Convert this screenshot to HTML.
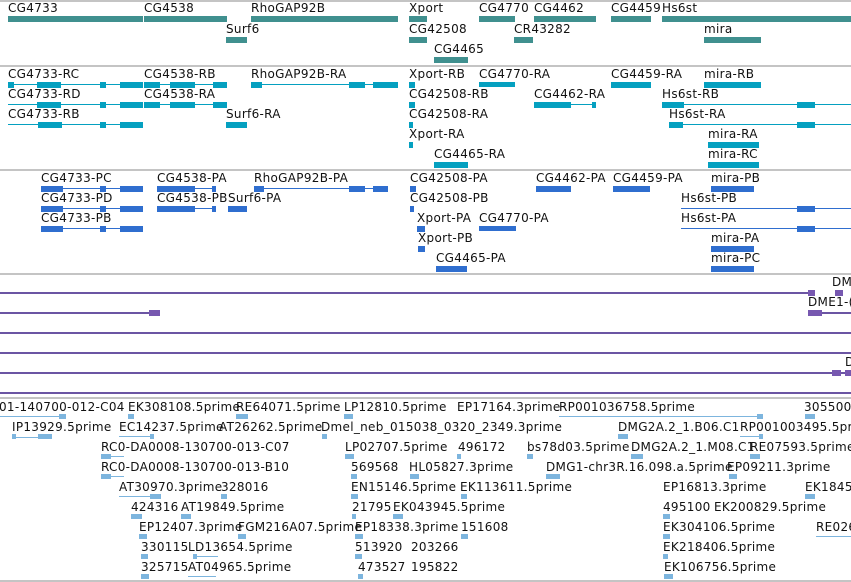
<!DOCTYPE html>
<html><head><meta charset="utf-8"><style>
html,body{margin:0;padding:0;background:#fff;width:851px;height:582px;overflow:hidden;position:relative}
.t{position:absolute;font-family:"DejaVu Sans","Liberation Sans",sans-serif;font-size:12px;line-height:14px;color:#111;white-space:nowrap;letter-spacing:0.3px}
.g{position:absolute;left:0;width:851px;height:2px;background:#c4c4c4}
.a{position:absolute;height:6px;background:#40908f}
.b{position:absolute;height:6px;background:#05a0c0}
.bl{position:absolute;height:1px;background:#05a0c0}
.c{position:absolute;height:6px;background:#2f6ecf}
.cl{position:absolute;height:1px;background:#2f6ecf}
.p{position:absolute;height:2px;background:#6b55a3}
.pb{position:absolute;height:6px;background:#7758b0}
.e{position:absolute;height:5px;background:#7db5de}
.el{position:absolute;height:1px;background:#7db5de}
</style></head><body>
<div class="g" style="top:0"></div>
<div class="t" style="left:8px;top:1px">CG4733</div><div class="a" style="left:8px;top:16px;width:135px"></div>
<div class="t" style="left:144px;top:1px">CG4538</div><div class="a" style="left:144px;top:16px;width:83px"></div>
<div class="t" style="left:251px;top:1px">RhoGAP92B</div><div class="a" style="left:251px;top:16px;width:147px"></div>
<div class="t" style="left:409px;top:1px">Xport</div><div class="a" style="left:409px;top:16px;width:18px"></div>
<div class="t" style="left:479px;top:1px">CG4770</div><div class="a" style="left:479px;top:16px;width:36px"></div>
<div class="t" style="left:534px;top:1px">CG4462</div><div class="a" style="left:534px;top:16px;width:62px"></div>
<div class="t" style="left:611px;top:1px">CG4459</div><div class="a" style="left:611px;top:16px;width:40px"></div>
<div class="t" style="left:662px;top:1px">Hs6st</div><div class="a" style="left:662px;top:16px;width:189px"></div>
<div class="t" style="left:226px;top:22px">Surf6</div><div class="a" style="left:226px;top:37px;width:21px"></div>
<div class="t" style="left:409px;top:22px">CG42508</div><div class="a" style="left:409px;top:37px;width:18px"></div>
<div class="t" style="left:514px;top:22px">CR43282</div><div class="a" style="left:514px;top:37px;width:19px"></div>
<div class="t" style="left:704px;top:22px">mira</div><div class="a" style="left:704px;top:37px;width:57px"></div>
<div class="t" style="left:434px;top:42px">CG4465</div><div class="a" style="left:434px;top:57px;width:34px"></div>
<div class="g" style="top:65px"></div>
<div class="t" style="left:8px;top:67px">CG4733-RC</div><div class="bl" style="left:8px;top:84px;width:135px"></div><div class="b" style="left:37px;top:82px;width:24px"></div><div class="b" style="left:8px;top:82px;width:6px"></div><div class="b" style="left:100px;top:82px;width:6px"></div><div class="b" style="left:120px;top:82px;width:23px"></div>
<div class="t" style="left:144px;top:67px">CG4538-RB</div><div class="b" style="left:144px;top:82px;width:16px"></div><div class="b" style="left:170px;top:82px;width:25px"></div><div class="bl" style="left:144px;top:84px;width:83px"></div><div class="b" style="left:213px;top:82px;width:14px"></div>
<div class="t" style="left:251px;top:67px">RhoGAP92B-RA</div><div class="bl" style="left:251px;top:84px;width:147px"></div><div class="b" style="left:349px;top:82px;width:16px"></div><div class="b" style="left:373px;top:82px;width:25px"></div><div class="b" style="left:251px;top:82px;width:11px"></div>
<div class="t" style="left:409px;top:67px">Xport-RB</div><div class="b" style="left:409px;top:82px;width:6px"></div>
<div class="t" style="left:479px;top:67px">CG4770-RA</div><div class="b" style="left:479px;top:82px;width:36px;height:5px"></div>
<div class="t" style="left:611px;top:67px">CG4459-RA</div><div class="b" style="left:611px;top:82px;width:40px"></div>
<div class="t" style="left:704px;top:67px">mira-RB</div><div class="b" style="left:704px;top:82px;width:57px"></div>
<div class="t" style="left:8px;top:87px">CG4733-RD</div><div class="bl" style="left:8px;top:104px;width:135px"></div><div class="b" style="left:37px;top:102px;width:24px"></div><div class="b" style="left:120px;top:102px;width:23px"></div><div class="b" style="left:100px;top:102px;width:6px"></div>
<div class="t" style="left:144px;top:87px">CG4538-RA</div><div class="b" style="left:144px;top:102px;width:16px"></div><div class="b" style="left:170px;top:102px;width:25px"></div><div class="bl" style="left:144px;top:104px;width:83px"></div><div class="b" style="left:213px;top:102px;width:14px"></div>
<div class="t" style="left:409px;top:87px">CG42508-RB</div><div class="b" style="left:409px;top:102px;width:6px"></div>
<div class="t" style="left:534px;top:87px">CG4462-RA</div><div class="b" style="left:534px;top:102px;width:37px"></div><div class="bl" style="left:534px;top:104px;width:62px"></div><div class="b" style="left:592px;top:102px;width:4px"></div>
<div class="t" style="left:662px;top:87px">Hs6st-RB</div><div class="bl" style="left:662px;top:104px;width:189px"></div><div class="b" style="left:662px;top:102px;width:22px"></div><div class="b" style="left:797px;top:102px;width:18px"></div>
<div class="t" style="left:8px;top:107px">CG4733-RB</div><div class="bl" style="left:8px;top:124px;width:135px"></div><div class="b" style="left:38px;top:122px;width:24px"></div><div class="b" style="left:120px;top:122px;width:23px"></div><div class="b" style="left:100px;top:122px;width:6px"></div>
<div class="t" style="left:226px;top:107px">Surf6-RA</div><div class="b" style="left:226px;top:122px;width:21px"></div>
<div class="t" style="left:409px;top:107px">CG42508-RA</div><div class="b" style="left:409px;top:122px;width:4px"></div>
<div class="t" style="left:669px;top:107px">Hs6st-RA</div><div class="bl" style="left:669px;top:124px;width:182px"></div><div class="b" style="left:669px;top:122px;width:14px"></div><div class="b" style="left:797px;top:122px;width:18px"></div>
<div class="t" style="left:409px;top:127px">Xport-RA</div><div class="b" style="left:409px;top:142px;width:4px"></div>
<div class="t" style="left:708px;top:127px">mira-RA</div><div class="b" style="left:708px;top:142px;width:51px"></div>
<div class="t" style="left:434px;top:147px">CG4465-RA</div><div class="b" style="left:434px;top:162px;width:34px"></div>
<div class="t" style="left:708px;top:147px">mira-RC</div><div class="b" style="left:708px;top:162px;width:51px"></div>
<div class="g" style="top:169px"></div>
<div class="t" style="left:41px;top:171px">CG4733-PC</div><div class="cl" style="left:41px;top:188px;width:102px"></div><div class="c" style="left:41px;top:186px;width:22px"></div><div class="c" style="left:120px;top:186px;width:23px"></div><div class="c" style="left:100px;top:186px;width:6px"></div>
<div class="t" style="left:157px;top:171px">CG4538-PA</div><div class="c" style="left:157px;top:186px;width:38px"></div><div class="cl" style="left:157px;top:188px;width:59px"></div><div class="c" style="left:212px;top:186px;width:4px"></div>
<div class="t" style="left:254px;top:171px">RhoGAP92B-PA</div><div class="cl" style="left:254px;top:188px;width:134px"></div><div class="c" style="left:349px;top:186px;width:16px"></div><div class="c" style="left:373px;top:186px;width:15px"></div><div class="c" style="left:254px;top:186px;width:10px"></div>
<div class="t" style="left:410px;top:171px">CG42508-PA</div><div class="c" style="left:410px;top:186px;width:6px"></div>
<div class="t" style="left:536px;top:171px">CG4462-PA</div><div class="c" style="left:536px;top:186px;width:35px"></div>
<div class="t" style="left:613px;top:171px">CG4459-PA</div><div class="c" style="left:613px;top:186px;width:37px"></div>
<div class="t" style="left:711px;top:171px">mira-PB</div><div class="c" style="left:711px;top:186px;width:43px"></div>
<div class="t" style="left:41px;top:191px">CG4733-PD</div><div class="cl" style="left:41px;top:208px;width:102px"></div><div class="c" style="left:41px;top:206px;width:22px"></div><div class="c" style="left:120px;top:206px;width:23px"></div><div class="c" style="left:100px;top:206px;width:6px"></div>
<div class="t" style="left:157px;top:191px">CG4538-PB</div><div class="c" style="left:157px;top:206px;width:38px"></div><div class="cl" style="left:157px;top:208px;width:59px"></div><div class="c" style="left:212px;top:206px;width:4px"></div>
<div class="t" style="left:228px;top:191px">Surf6-PA</div><div class="c" style="left:228px;top:206px;width:19px"></div>
<div class="t" style="left:410px;top:191px">CG42508-PB</div><div class="c" style="left:410px;top:206px;width:4px"></div>
<div class="t" style="left:681px;top:191px">Hs6st-PB</div><div class="cl" style="left:681px;top:208px;width:170px"></div><div class="c" style="left:797px;top:206px;width:18px"></div>
<div class="t" style="left:41px;top:211px">CG4733-PB</div><div class="cl" style="left:41px;top:228px;width:102px"></div><div class="c" style="left:41px;top:226px;width:22px"></div><div class="c" style="left:120px;top:226px;width:23px"></div><div class="c" style="left:100px;top:226px;width:6px"></div>
<div class="t" style="left:417px;top:211px">Xport-PA</div><div class="c" style="left:417px;top:226px;width:8px"></div>
<div class="t" style="left:479px;top:211px">CG4770-PA</div><div class="c" style="left:479px;top:226px;width:37px;height:5px"></div>
<div class="t" style="left:681px;top:211px">Hs6st-PA</div><div class="cl" style="left:681px;top:228px;width:170px"></div><div class="c" style="left:797px;top:226px;width:18px"></div>
<div class="t" style="left:418px;top:231px">Xport-PB</div><div class="c" style="left:418px;top:246px;width:7px"></div>
<div class="t" style="left:711px;top:231px">mira-PA</div><div class="c" style="left:711px;top:246px;width:43px"></div>
<div class="t" style="left:436px;top:251px">CG4465-PA</div><div class="c" style="left:436px;top:266px;width:31px"></div>
<div class="t" style="left:711px;top:251px">mira-PC</div><div class="c" style="left:711px;top:266px;width:43px"></div>
<div class="g" style="top:273px"></div>
<div class="p" style="left:0;top:292px;width:815px"></div><div class="pb" style="left:808px;top:290px;width:7px"></div>
<div class="t" style="left:832px;top:275px">DM</div><div class="pb" style="left:835px;top:290px;width:8px"></div>
<div class="t" style="left:808px;top:295px">DME1-(</div>
<div class="p" style="left:0;top:312px;width:160px"></div><div class="pb" style="left:149px;top:310px;width:11px"></div>
<div class="p" style="left:808px;top:312px;width:43px"></div><div class="pb" style="left:808px;top:310px;width:14px"></div>
<div class="p" style="left:0;top:332px;width:851px"></div>
<div class="p" style="left:0;top:352px;width:851px"></div>
<div class="t" style="left:845px;top:355px">D</div>
<div class="p" style="left:0;top:372px;width:851px"></div><div class="pb" style="left:832px;top:370px;width:9px"></div><div class="pb" style="left:845px;top:370px;width:6px"></div>
<div class="p" style="left:0;top:392px;width:851px"></div>
<div class="g" style="top:397px"></div>
<div class="t" style="left:-1px;top:400px">01-140700-012-C04</div><div class="el" style="left:0;top:416px;width:66px"></div><div class="e" style="left:59px;top:414px;width:7px"></div>
<div class="t" style="left:128px;top:400px">EK308108.5prime</div><div class="e" style="left:128px;top:414px;width:6px"></div>
<div class="t" style="left:236px;top:400px">RE64071.5prime</div><div class="e" style="left:236px;top:414px;width:12px"></div>
<div class="t" style="left:344px;top:400px">LP12810.5prime</div><div class="e" style="left:344px;top:414px;width:9px"></div>
<div class="t" style="left:457px;top:400px">EP17164.3prime</div>
<div class="t" style="left:559px;top:400px">RP001036758.5prime</div><div class="el" style="left:559px;top:416px;width:204px"></div><div class="e" style="left:757px;top:414px;width:6px"></div>
<div class="t" style="left:804px;top:400px">305500</div><div class="e" style="left:805px;top:414px;width:10px"></div>
<div class="t" style="left:12px;top:420px">IP13929.5prime</div><div class="el" style="left:12px;top:437px;width:40px"></div><div class="e" style="left:38px;top:434px;width:14px"></div><div class="e" style="left:12px;top:434px;width:4px"></div>
<div class="t" style="left:119px;top:420px">EC14237.5prime</div><div class="el" style="left:119px;top:436px;width:35px"></div><div class="e" style="left:150px;top:434px;width:4px"></div>
<div class="t" style="left:219px;top:420px">AT26262.5prime</div>
<div class="t" style="left:321px;top:420px">Dmel_neb_015038_0320_2349.3prime</div><div class="e" style="left:322px;top:434px;width:5px"></div>
<div class="t" style="left:618px;top:420px">DMG2A.2_1.B06.C1</div><div class="e" style="left:618px;top:434px;width:10px"></div>
<div class="t" style="left:740px;top:420px">RP001003495.5prime</div><div class="el" style="left:740px;top:436px;width:23px"></div><div class="e" style="left:759px;top:434px;width:4px"></div>
<div class="t" style="left:101px;top:440px">RC0-DA0008-130700-013-C07</div><div class="el" style="left:101px;top:456px;width:23px"></div><div class="e" style="left:101px;top:454px;width:10px"></div>
<div class="t" style="left:345px;top:440px">LP02707.5prime</div><div class="e" style="left:345px;top:454px;width:9px"></div>
<div class="t" style="left:458px;top:440px">496172</div><div class="e" style="left:457px;top:454px;width:4px"></div>
<div class="t" style="left:527px;top:440px">bs78d03.5prime</div><div class="e" style="left:527px;top:454px;width:6px"></div>
<div class="t" style="left:631px;top:440px">DMG2A.2_1.M08.C1</div><div class="e" style="left:631px;top:454px;width:12px"></div>
<div class="t" style="left:750px;top:440px">RE07593.5prime</div><div class="e" style="left:750px;top:454px;width:10px"></div>
<div class="t" style="left:101px;top:460px">RC0-DA0008-130700-013-B10</div><div class="el" style="left:101px;top:476px;width:23px"></div><div class="e" style="left:101px;top:474px;width:10px"></div>
<div class="t" style="left:351px;top:460px">569568</div><div class="e" style="left:351px;top:474px;width:6px"></div>
<div class="t" style="left:409px;top:460px">HL05827.3prime</div><div class="e" style="left:410px;top:474px;width:9px"></div>
<div class="t" style="left:546px;top:460px">DMG1-chr3R.16.098.a.5prime</div><div class="e" style="left:546px;top:474px;width:14px"></div>
<div class="t" style="left:727px;top:460px">EP09211.3prime</div><div class="e" style="left:729px;top:474px;width:8px"></div>
<div class="t" style="left:119px;top:480px">AT30970.3prime</div><div class="el" style="left:119px;top:496px;width:42px"></div><div class="e" style="left:150px;top:494px;width:11px"></div>
<div class="t" style="left:221px;top:480px">328016</div><div class="e" style="left:221px;top:494px;width:6px"></div>
<div class="t" style="left:351px;top:480px">EN15146.5prime</div><div class="e" style="left:351px;top:494px;width:7px"></div>
<div class="t" style="left:460px;top:480px">EK113611.5prime</div><div class="e" style="left:461px;top:494px;width:6px"></div>
<div class="t" style="left:663px;top:480px">EP16813.3prime</div>
<div class="t" style="left:805px;top:480px">EK1845</div><div class="e" style="left:805px;top:494px;width:10px"></div>
<div class="t" style="left:131px;top:500px">424316</div><div class="e" style="left:131px;top:514px;width:11px"></div>
<div class="t" style="left:181px;top:500px">AT19849.5prime</div><div class="e" style="left:181px;top:514px;width:10px"></div>
<div class="t" style="left:352px;top:500px">21795</div><div class="e" style="left:352px;top:514px;width:4px"></div>
<div class="t" style="left:393px;top:500px">EK043945.5prime</div><div class="e" style="left:393px;top:514px;width:10px"></div>
<div class="t" style="left:663px;top:500px">495100</div><div class="e" style="left:663px;top:514px;width:7px"></div>
<div class="t" style="left:714px;top:500px">EK200829.5prime</div>
<div class="t" style="left:139px;top:520px">EP12407.3prime</div><div class="e" style="left:139px;top:534px;width:8px"></div>
<div class="t" style="left:238px;top:520px">FGM216A07.5prime</div><div class="e" style="left:238px;top:534px;width:8px"></div>
<div class="t" style="left:355px;top:520px">EP18338.3prime</div><div class="e" style="left:355px;top:534px;width:8px"></div>
<div class="t" style="left:461px;top:520px">151608</div><div class="e" style="left:461px;top:534px;width:7px"></div>
<div class="t" style="left:663px;top:520px">EK304106.5prime</div><div class="e" style="left:663px;top:534px;width:7px"></div>
<div class="t" style="left:816px;top:520px">RE026</div><div class="el" style="left:816px;top:536px;width:35px"></div>
<div class="t" style="left:141px;top:540px">330115</div><div class="e" style="left:141px;top:554px;width:7px"></div>
<div class="t" style="left:188px;top:540px">LD13654.5prime</div><div class="el" style="left:193px;top:556px;width:25px"></div><div class="e" style="left:193px;top:554px;width:4px"></div>
<div class="t" style="left:355px;top:540px">513920</div><div class="e" style="left:355px;top:554px;width:7px"></div>
<div class="t" style="left:411px;top:540px">203266</div>
<div class="t" style="left:663px;top:540px">EK218406.5prime</div><div class="e" style="left:663px;top:554px;width:5px"></div>
<div class="t" style="left:141px;top:560px">325715</div><div class="e" style="left:141px;top:574px;width:8px"></div>
<div class="t" style="left:188px;top:560px">AT04965.5prime</div><div class="el" style="left:188px;top:576px;width:28px"></div>
<div class="t" style="left:358px;top:560px">473527</div><div class="e" style="left:358px;top:574px;width:5px"></div>
<div class="t" style="left:411px;top:560px">195822</div>
<div class="t" style="left:664px;top:560px">EK106756.5prime</div><div class="e" style="left:664px;top:574px;width:9px"></div>
<div class="g" style="top:580px"></div>
</body></html>
